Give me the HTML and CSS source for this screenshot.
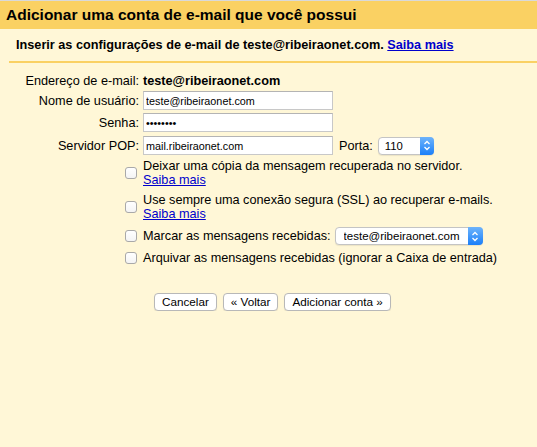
FILE: index.html
```html
<!DOCTYPE html>
<html lang="pt-BR">
<head>
    <meta charset="UTF-8">
    <meta name="viewport" content="width=device-width, initial-scale=1.0">
    <title>Adicionar uma conta de e-mail</title>
    <link rel="stylesheet" href="styles.css">
</head>
<body>
    <h1 class="title">Adicionar uma conta de e-mail que você possui</h1>

    <div class="intro">
        <p>Inserir as configurações de e-mail de teste@ribeiraonet.com. <a href="#">Saiba mais</a></p>
    </div>

    <form class="settings" onsubmit="return false">
        <div class="field field-static">
            <span class="label">Endereço de e-mail:</span>
            <strong class="value">teste@ribeiraonet.com</strong>
        </div>
        <div class="field">
            <label class="label" for="user">Nome de usuário:</label>
            <input class="text" id="user" type="text" value="teste@ribeiraonet.com">
        </div>
        <div class="field field-pass">
            <label class="label" for="pass">Senha:</label>
            <input class="text" id="pass" type="password" value="senha123">
        </div>
        <div class="field">
            <label class="label" for="server">Servidor POP:</label>
            <div class="inline">
                <input class="text" id="server" type="text" value="mail.ribeiraonet.com">
                <label class="port-label" for="port">Porta:</label>
                <div class="select select-port">
                    <select id="port"><option>110</option><option>995</option></select>
                    <span class="stepper">
                        <svg width="8" height="11" viewBox="0 0 8 11"><path d="M1.5 4 L4 1.5 L6.5 4 M1.5 7 L4 9.5 L6.5 7" fill="none" stroke="#fff" stroke-width="1.3"/></svg>
                    </span>
                </div>
            </div>
        </div>

        <!-- opções -->
        <div class="options">
            <label class="option">
                <input type="checkbox">
                <span>Deixar uma cópia da mensagem recuperada no servidor.<br><a href="#">Saiba mais</a></span>
            </label>
            <label class="option">
                <input type="checkbox">
                <span>Use sempre uma conexão segura (SSL) ao recuperar e-mails.<br><a href="#">Saiba mais</a></span>
            </label>
            <div class="option">
                <input type="checkbox" id="label-mail">
                <label for="label-mail">Marcar as mensagens recebidas:</label>
                <div class="select select-label">
                    <select><option>teste@ribeiraonet.com</option></select>
                    <span class="stepper">
                        <svg width="8" height="11" viewBox="0 0 8 11"><path d="M1.5 4 L4 1.5 L6.5 4 M1.5 7 L4 9.5 L6.5 7" fill="none" stroke="#fff" stroke-width="1.3"/></svg>
                    </span>
                </div>
            </div>
            <label class="option">
                <input type="checkbox">
                <span>Arquivar as mensagens recebidas (ignorar a Caixa de entrada)</span>
            </label>
        </div>

        <div class="actions">
            <button type="button">Cancelar</button>
            <button type="button">« Voltar</button>
            <button type="submit">Adicionar conta »</button>
        </div>
    </form>
</body>
</html>
```

FILE: styles.css
```css
body {
    margin: 0;
    background: #fff7d7;
    color: #000;
    font-family: "Liberation Sans", Arial, sans-serif;
    font-size: 12.7px;
}

a {
    color: #0000cc;
}

.title {
    margin: 0;
    height: 28px;
    padding: 0 6px;
    border-top: 1px solid #d9d9d9;
    background: #fad163;
    font-size: 15.5px;
    line-height: 28px;
}

.intro {
    margin-left: 9px;
    padding: 8px 0 8px 7px;
    border-bottom: 2px solid #fad163;
}

.intro p {
    margin: 0;
    font-weight: bold;
    line-height: 16px;
}

.settings {
    padding-top: 10px;
}

.field {
    display: grid;
    grid-template-columns: 139px auto;
    column-gap: 4px;
    align-items: center;
    margin-bottom: 3px;
}

.field-static {
    line-height: 16px;
    margin-bottom: 2px;
}

.field-pass {
    margin-bottom: 4px;
}

.label {
    text-align: right;
}

.inline {
    display: flex;
    align-items: center;
}

.text {
    box-sizing: border-box;
    width: 190px;
    height: 19px;
    margin: 0;
    padding: 0 2px;
    border: 1px solid #c8c8c8;
    border-top-color: #b4b4b4;
    background: #fff;
    font-family: "Liberation Sans", Arial, sans-serif;
    font-size: 10.8px;
    outline: none;
}

.port-label {
    margin: 0 5px 0 6px;
}

/* select com setas azuis */
.select {
    position: relative;
    box-sizing: border-box;
    height: 18px;
    border: 1px solid #c4c4c4;
    border-radius: 4px;
    background: #fff;
    box-shadow: 0 1px 1px rgba(0, 0, 0, 0.08);
}

.select select {
    appearance: none;
    -webkit-appearance: none;
    width: 100%;
    height: 100%;
    margin: 0;
    border: none;
    background: transparent;
    font-family: "Liberation Sans", Arial, sans-serif;
    outline: none;
}

.stepper {
    position: absolute;
    top: -1px;
    right: -1px;
    bottom: -1px;
    display: flex;
    align-items: center;
    justify-content: center;
    border-radius: 0 4px 4px 0;
    background: linear-gradient(to bottom, #6eb4fb, #1b7ff9);
    pointer-events: none;
}

.select-port {
    width: 56px;
}

.select-port select {
    padding: 0 0 0 6px;
    font-size: 11.3px;
}

.select-port .stepper {
    width: 14px;
}

.select-label {
    width: 148px;
    margin-left: 4px;
}

.select-label select {
    padding: 0 0 0 8px;
    font-size: 11.5px;
}

.select-label .stepper {
    width: 15px;
}

.options {
    display: flex;
    flex-direction: column;
    gap: 6px;
    margin: 4px 0 0 125px;
}

.option {
    display: flex;
    align-items: center;
    line-height: 14px;
}

.option input[type="checkbox"] {
    appearance: none;
    -webkit-appearance: none;
    flex-shrink: 0;
    width: 12px;
    height: 12px;
    margin: 0 6px 0 0;
    border: 1px solid #a9a9a9;
    border-radius: 3px;
    background: linear-gradient(to bottom, #fff, #f4f4f4);
}

.actions {
    display: flex;
    gap: 6px;
    margin: 28px 0 0 154px;
}

.actions button {
    height: 18px;
    padding: 0 7px;
    border: 1px solid #b8b8b8;
    border-radius: 4px;
    background: #fff;
    box-shadow: 0 1px 1px rgba(0, 0, 0, 0.08);
    font-family: "Liberation Sans", Arial, sans-serif;
    font-size: 11.7px;
    line-height: 16px;
    cursor: pointer;
}
```
